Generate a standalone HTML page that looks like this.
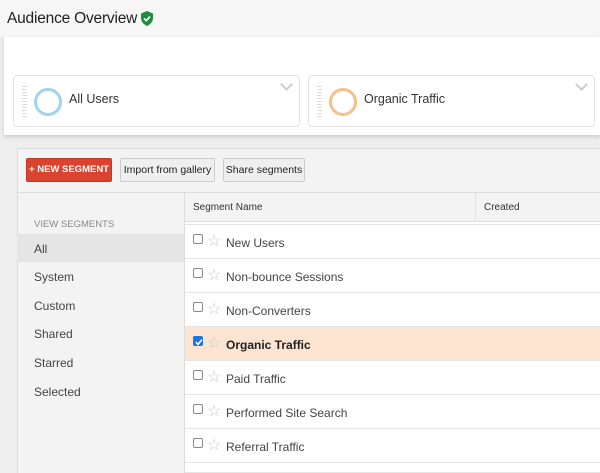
<!DOCTYPE html>
<html style="height:473px;overflow:hidden"><head><style>
*{margin:0;padding:0;box-sizing:border-box}
body{width:600px;height:473px;overflow:hidden;background:#eeeeee;font-family:"Liberation Sans",Arial,sans-serif;position:relative;color:#333}
.a{position:absolute}
.title{left:7px;top:10px;font-size:15.5px;color:#222;white-space:nowrap;letter-spacing:-0.2px}
.top{left:0;top:0;width:600px;height:37px;background:#f6f6f6}
.panel{left:4px;top:37px;width:596px;height:98px;background:#fff;box-shadow:0 2px 4px rgba(0,0,0,.15)}
.card{top:75px;height:52px;background:#fff;border:1px solid #e2e2e2;border-radius:4px}
.grip{top:10px;left:8px;width:5px;height:32px;background:repeating-linear-gradient(#ddd 0 1px,transparent 1px 3px)}
.ring{top:12px;width:28px;height:28px;border-radius:50%;border:3.5px solid}
.cardt{top:16px;font-size:12.5px;color:#333}
.chev{top:4px;right:8px;width:9px;height:9px;border-right:2px solid #ccc;border-bottom:2px solid #ccc;transform:rotate(45deg)}
.box{left:17px;top:148px;width:583px;height:325px;background:#f3f3f3;border:1px solid #ddd;border-right:none;border-bottom:none}
.btn{top:158px;height:24px;font-size:10.5px;line-height:22px;border:1px solid #ccc;background:#efefef;color:#222;border-radius:2px;white-space:nowrap;text-align:center;overflow:hidden}
.nav{font-size:12px;color:#444;left:34px}
.row{left:185px;width:415px;height:34px;background:#fff;border-bottom:1px solid #e6e6e6;font-size:12px;color:#444;overflow:hidden}
.row .cb{position:absolute;left:8px;top:9px;width:10px;height:10px;border:1px solid #888;border-radius:2px;background:#fff}
.row .st{position:absolute;left:22px;top:6px;font-size:16px;color:#ccc}
.row .t{position:absolute;left:41px;top:11px}
</style></head><body>
<div class="a top"></div>
<div class="a title">Audience Overview</div>
<svg class="a" style="left:140px;top:11px" width="14" height="15" viewBox="0 0 14 15"><path d="M7 0L13 2.5V7C13 11 10 13.5 7 15C4 13.5 1 11 1 7V2.5Z" fill="#1e8e3e"/><path d="M4 7.5L6.2 9.6L10 5.6" stroke="#fff" stroke-width="1.8" fill="none"/></svg>
<div class="a panel"></div>
<div class="a card" style="left:13px;width:287px"><div class="a grip"></div><div class="a ring" style="left:20px;border-color:#9fd3ee"></div><div class="a cardt" style="left:55px">All Users</div><div class="a chev"></div></div>
<div class="a card" style="left:308px;width:287px"><div class="a grip"></div><div class="a ring" style="left:20px;border-color:#f6c08c"></div><div class="a cardt" style="left:55px">Organic Traffic</div><div class="a chev"></div></div>
<div class="a box"></div>
<div class="a btn" style="left:26px;width:86px;background:#d9432f;border-color:#c53727;color:#fff;font-weight:bold;font-size:9.5px">+ NEW SEGMENT</div>
<div class="a btn" style="left:120px;width:95px">Import from gallery</div>
<div class="a btn" style="left:223px;width:82px">Share segments</div>
<div class="a" style="left:17px;top:192px;width:583px;height:1px;background:#ddd"></div>
<div class="a" style="left:184px;top:192px;width:1px;height:281px;background:#ddd"></div>
<div class="a" style="left:185px;top:193px;width:415px;height:29px;background:#f3f3f3;border-bottom:1px solid #ddd"></div>
<div class="a" style="left:475px;top:193px;width:1px;height:29px;background:#e3e3e3"></div>
<div class="a" style="left:193px;top:202px;font-size:10px;color:#333">Segment Name</div>
<div class="a" style="left:484px;top:202px;font-size:10px;color:#333">Created</div>
<div class="a" style="left:185px;top:222px;width:415px;height:3px;background:#fff;border-bottom:1px solid #e6e6e6"></div>
<div class="a" style="left:34px;top:219px;font-size:9.5px;color:#888">VIEW SEGMENTS</div>
<div class="a" style="left:17px;top:234px;width:167px;height:28px;background:#e5e5e5"></div>
<div class="a nav" style="top:242px">All</div>
<div class="a nav" style="top:270px">System</div>
<div class="a nav" style="top:299px">Custom</div>
<div class="a nav" style="top:327px">Shared</div>
<div class="a nav" style="top:356px">Starred</div>
<div class="a nav" style="top:385px">Selected</div>
<div class="a row" style="top:225px"><div class="cb"></div><div class="st">☆</div><div class="t">New Users</div></div>
<div class="a row" style="top:259px"><div class="cb"></div><div class="st">☆</div><div class="t">Non-bounce Sessions</div></div>
<div class="a row" style="top:293px"><div class="cb"></div><div class="st">☆</div><div class="t">Non-Converters</div></div>
<div class="a row" style="top:327px;background:#fce4d0"><div class="cb" style="background:#1a73e8;border-color:#1a73e8"><svg style="position:absolute;left:0;top:0" width="10" height="10"><path d="M2 5L4 7.5L8 2.5" stroke="#fff" stroke-width="1.6" fill="none"/></svg></div><div class="st">☆</div><div class="t" style="font-weight:bold;color:#222">Organic Traffic</div></div>
<div class="a row" style="top:361px"><div class="cb"></div><div class="st">☆</div><div class="t">Paid Traffic</div></div>
<div class="a row" style="top:395px"><div class="cb"></div><div class="st">☆</div><div class="t">Performed Site Search</div></div>
<div class="a row" style="top:429px"><div class="cb"></div><div class="st">☆</div><div class="t">Referral Traffic</div></div>
<div class="a row" style="top:463px;height:10px"><div class="cb"></div></div>
</body></html>
